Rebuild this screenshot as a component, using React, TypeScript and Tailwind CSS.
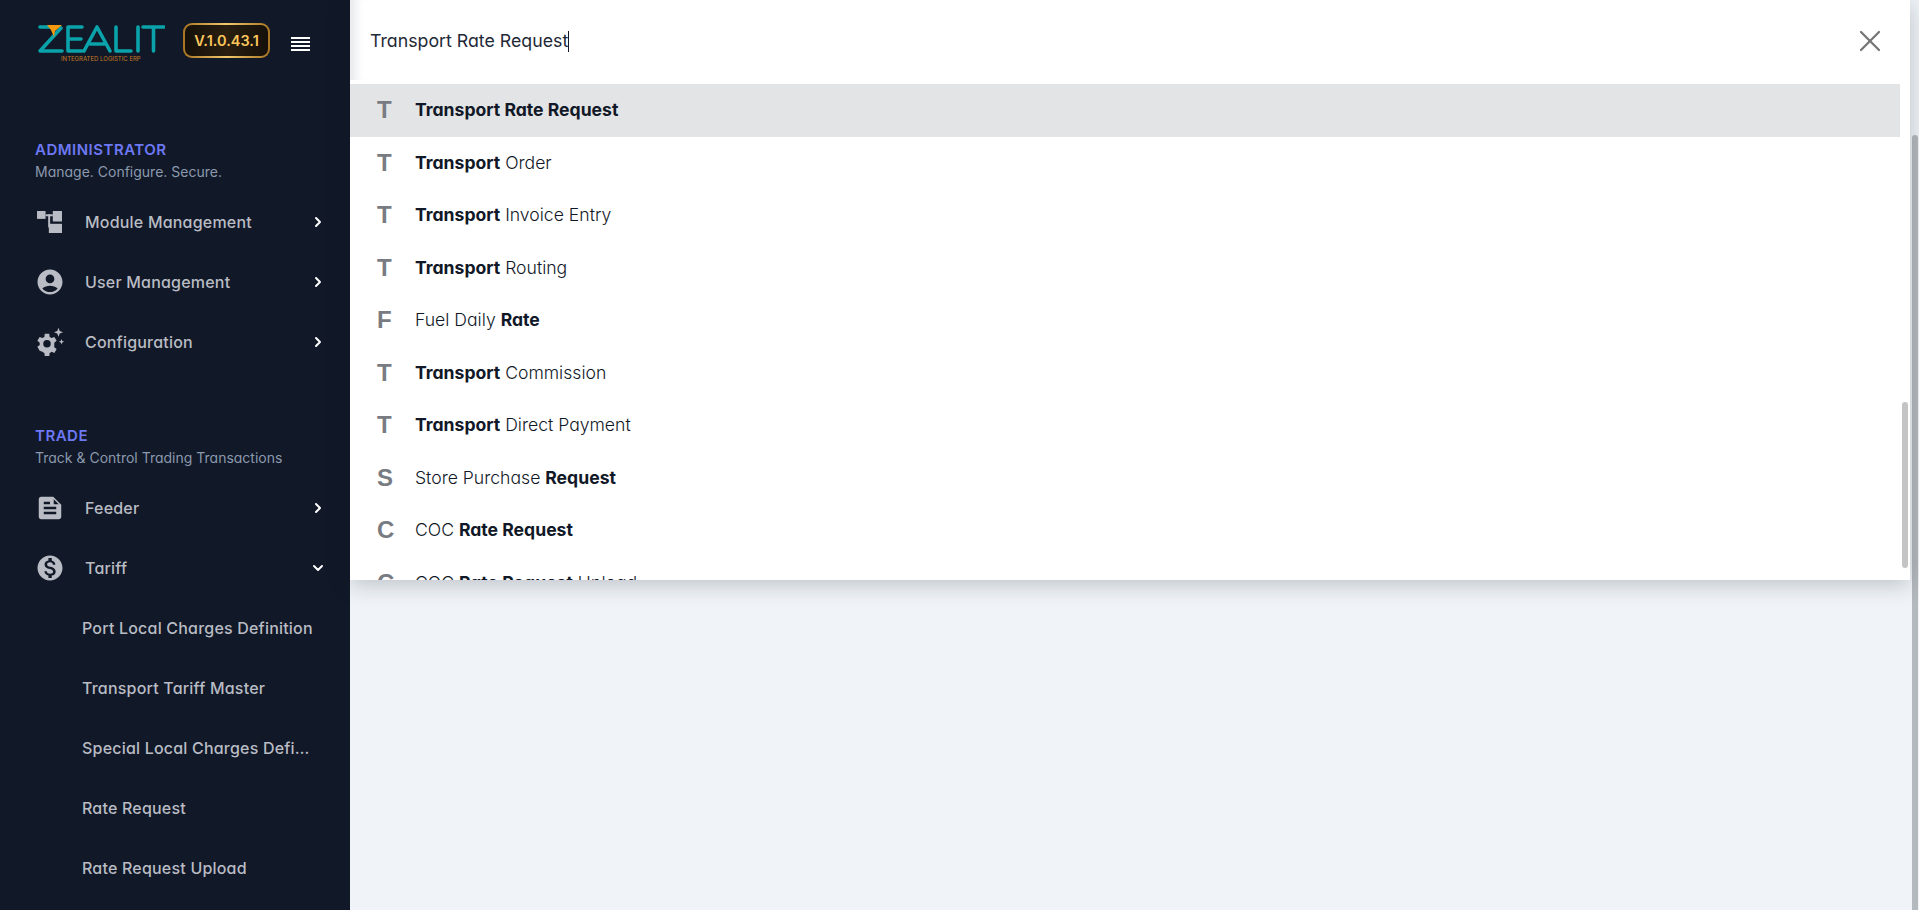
import type { ReactNode } from 'react';
import { ChevronRight, ChevronDown, X } from 'lucide-react';

const FONT = "font-['Inter',sans-serif] [font-feature-settings:'cv11']";

function ModuleIcon() {
  return (
    <svg viewBox="112 66 76 67" className="w-[25px] h-[22px] -ml-[1px] fill-[#b9bcc4]">
      <rect x="112" y="66" width="26" height="24" />
      <rect x="160" y="66" width="28" height="32" />
      <rect x="148" y="105" width="40" height="28" />
      <rect x="138" y="76" width="22" height="6" />
      <rect x="146" y="76" width="6" height="40" />
    </svg>
  );
}

function UserIcon() {
  return (
    <svg viewBox="0 0 24 24" className="w-[30px] h-[30px] fill-[#b9bcc4]">
      <path d="M12 2C6.48 2 2 6.48 2 12s4.48 10 10 10 10-4.48 10-10S17.52 2 12 2zm0 4c1.93 0 3.5 1.57 3.5 3.5S13.93 13 12 13s-3.5-1.57-3.5-3.5S10.07 6 12 6zm0 14c-2.03 0-4.43-.82-6.14-2.88C7.55 15.8 9.68 15 12 15s4.45.8 6.14 2.12C16.43 19.18 14.03 20 12 20z" />
    </svg>
  );
}

function GearIcon() {
  return (
    <svg viewBox="0 0 24 24" className="w-[30px] h-[30px] fill-[#b9bcc4]">
      <path d="M17.4 12.9c.04-.3.06-.6.06-.9s-.02-.6-.06-.9l1.9-1.5-1.8-3.1-2.2.9c-.5-.4-1-.7-1.6-.9L13.4 4h-3.6l-.3 2.5c-.6.2-1.1.5-1.6.9l-2.2-.9-1.8 3.1 1.9 1.5c-.04.3-.06.6-.06.9s.02.6.06.9l-1.9 1.5 1.8 3.1 2.2.9c.5.4 1 .7 1.6.9l.3 2.5h3.6l.3-2.5c.6-.2 1.1-.5 1.6-.9l2.2.9 1.8-3.1-1.9-1.5zM11.6 15a3 3 0 1 1 0-6 3 3 0 0 1 0 6z" transform="translate(-2 1.4)" />
      <path d="m18.8 .6 1 2.6 2.6 1-2.6 1-1 2.6-1-2.6-2.6-1 2.6-1zM21.2 9.6l.6 1.6 1.6.6-1.6.6-.6 1.6-.6-1.6-1.6-.6 1.6-.6z" />
    </svg>
  );
}

function DocIcon() {
  return (
    <svg viewBox="0 0 24 24" className="w-[30px] h-[30px] fill-[#b9bcc4]">
      <path d="M14.6 3H5c-1.1 0-2 .9-2 2v14c0 1.1.9 2 2 2h14c1.1 0 2-.9 2-2V9.4L14.6 3zM7 7h5v2H7V7zm10 10H7v-2h10v2zm0-4H7v-2h10v2zm-2-4V5l4 4h-4z" />
    </svg>
  );
}

function DollarIcon() {
  return (
    <svg viewBox="0 0 24 24" className="w-[30px] h-[30px] fill-[#b9bcc4]">
      <path d="M12 2C6.48 2 2 6.48 2 12s4.48 10 10 10 10-4.48 10-10S17.52 2 12 2zm1.41 16.09V20h-2.67v-1.93c-1.71-.36-3.16-1.46-3.27-3.4h1.96c.1 1.05.82 1.87 2.65 1.87 1.96 0 2.4-.98 2.4-1.59 0-.83-.44-1.61-2.67-2.14-2.48-.6-4.18-1.62-4.18-3.67 0-1.72 1.39-2.84 3.11-3.21V4h2.67v1.95c1.86.45 2.79 1.86 2.85 3.39H14.3c-.05-1.11-.64-1.87-2.22-1.87-1.5 0-2.4.68-2.4 1.64 0 .84.65 1.39 2.67 1.91s4.18 1.39 4.18 3.91c-.01 1.83-1.38 2.83-3.12 3.16z" />
    </svg>
  );
}

function Logo() {
  return (
    <div className="relative w-[128px] h-[42px]">
      <svg viewBox="0 0 128 30" className="absolute left-0 top-0 w-[128px] h-[30px]">
        <g fill="none" stroke="#0aa3ab" strokeWidth="3.6" strokeLinecap="round" strokeLinejoin="round">
          <path d="M3 3H16" />
          <path d="M24 4 3 27H25" />
          <path d="M45 3H31V27H45M31 15H44" />
          <path d="M47 27 60 3 73 27M53 20H68" />
          <path d="M79 3V27H94" />
          <path d="M101 3V27" />
          <path d="M106 3H127M116.5 3V27" />
        </g>
        <path d="M10 1H25L18 7 17 13 14 6Z" fill="#f59a0e" />
      </svg>
      <span className="absolute left-[24px] top-[32px] text-[6px] leading-none whitespace-nowrap text-[#c57a24] font-['Inter',sans-serif]">
        INTEGRATED LOGISTIC ERP
      </span>
    </div>
  );
}

function HamburgerIcon() {
  return (
    <div className="flex flex-col gap-[2px] w-[19px]">
      <div className="h-[2px] bg-white" />
      <div className="h-[2px] bg-white" />
      <div className="h-[2px] bg-white" />
      <div className="h-[2px] bg-white" />
    </div>
  );
}

function NavItem({ icon, label, open }: { icon: ReactNode; label: string; open?: boolean }) {
  return (
    <div className="flex items-center h-[60px] pl-[35px] pr-[24px]">
      <div className="w-[30px] h-[30px] flex items-center justify-center shrink-0">{icon}</div>
      <span className="ml-[20px] flex-1 text-[16px] tracking-[0.2px] font-medium text-[#b9bcc4]">{label}</span>
      {open ? (
        <ChevronDown className="w-[16px] h-[16px] text-white" strokeWidth={3} />
      ) : (
        <ChevronRight className="w-[16px] h-[16px] text-white" strokeWidth={3} />
      )}
    </div>
  );
}

function SubItem({ label }: { label: string }) {
  return (
    <div className="flex items-center h-[60px] pl-[82px] pr-[37px]">
      <span className="truncate text-[16px] tracking-[0.2px] font-medium text-[#b9bcc4]">{label}</span>
    </div>
  );
}

function SectionHead({ title, sub }: { title: string; sub: string }) {
  return (
    <div className="pl-[35px]">
      <div className="text-[15px] leading-[20px] font-semibold tracking-[0.5px] text-[#6d78f5]">{title}</div>
      <div className="text-[14px] leading-[20px] mt-[2px] text-[#8b99ae]">{sub}</div>
    </div>
  );
}

const results: { letter: string; parts: [string, boolean][] }[] = [
  { letter: 'T', parts: [['Transport Rate Request', true]] },
  { letter: 'T', parts: [['Transport', true], [' Order', false]] },
  { letter: 'T', parts: [['Transport', true], [' Invoice Entry', false]] },
  { letter: 'T', parts: [['Transport', true], [' Routing', false]] },
  { letter: 'F', parts: [['Fuel Daily ', false], ['Rate', true]] },
  { letter: 'T', parts: [['Transport', true], [' Commission', false]] },
  { letter: 'T', parts: [['Transport', true], [' Direct Payment', false]] },
  { letter: 'S', parts: [['Store Purchase ', false], ['Request', true]] },
  { letter: 'C', parts: [['COC ', false], ['Rate Request', true]] },
  { letter: 'C', parts: [['COC ', false], ['Rate Request', true], [' Upload', false]] },
];

export default function App() {
  return (
    <div className={`flex h-[910px] w-full overflow-hidden bg-[#f0f4f8] ${FONT}`}>
      {/* Sidebar */}
      <aside className="w-[350px] shrink-0 bg-[#111827] flex flex-col overflow-hidden">
        <div className="flex items-start h-[80px] pl-[37px]">
          <div className="mt-[24px]">
            <Logo />
          </div>
          <div className="mt-[23px] ml-[18px] w-[87px] h-[35px] rounded-[9px] p-[2px] bg-linear-to-r from-[#a87422] via-[#f2cb6b] to-[#a87422]">
            <div className="w-full h-full rounded-[7px] bg-linear-to-r from-[#14100a] via-[#2a1f10] to-[#14100a] flex items-center justify-center text-[14.5px] font-semibold text-[#fbc75c] font-['Inter',sans-serif]">
              V.1.0.43.1
            </div>
          </div>
          <div className="mt-[37px] ml-[21px]">
            <HamburgerIcon />
          </div>
        </div>
        <div className="mt-[60px]">
          <SectionHead title="ADMINISTRATOR" sub="Manage. Configure. Secure." />
        </div>
        <div className="mt-[10px]">
          <NavItem icon={<ModuleIcon />} label="Module Management" />
          <NavItem icon={<UserIcon />} label="User Management" />
          <NavItem icon={<GearIcon />} label="Configuration" />
        </div>
        <div className="mt-[54px]">
          <SectionHead title="TRADE" sub="Track & Control Trading Transactions" />
        </div>
        <div className="mt-[10px]">
          <NavItem icon={<DocIcon />} label="Feeder" />
          <NavItem icon={<DollarIcon />} label="Tariff" open />
          <SubItem label="Port Local Charges Definition" />
          <SubItem label="Transport Tariff Master" />
          <SubItem label="Special Local Charges Definition" />
          <SubItem label="Rate Request" />
          <SubItem label="Rate Request Upload" />
        </div>
      </aside>

      {/* Main */}
      <main className="flex-1 min-w-0 flex">
        <div className="flex-1 min-w-0 relative">
          <div className="relative z-10 h-[580px] bg-white shadow-[0_4px_22px_rgba(17,24,39,0.24)] flex flex-col overflow-hidden">
            <div className="h-[80px] shrink-0 flex items-center pl-[20px] pr-[22px] pt-[2px] shadow-[inset_14px_0_12px_-10px_rgba(17,24,39,0.12)]">
              <span className="text-[17.75px] text-[#1f2937]">Transport Rate Request</span>
              <span className="w-px h-[21px] bg-[#111827]" />
              <div className="flex-1" />
              <X className="w-[36px] h-[36px] text-[#757575]" strokeWidth={1.5} />
            </div>
            <div className="relative flex-1 min-h-0 overflow-hidden pt-[4px]">
              <div className="pr-[10px]">
                {results.map((r, i) => (
                  <div key={i} className={`flex items-center h-[52.5px] ${i === 0 ? 'bg-[#e3e4e6]' : ''}`}>
                    <span className="w-[65px] pl-[27px] shrink-0 text-[24px] font-semibold text-[#787b82] font-['Liberation_Sans',sans-serif] leading-none">
                      {r.letter}
                    </span>
                    <span className="text-[17.6px] text-[#111827] font-light whitespace-pre">
                      {r.parts.map(([t, b], j) => (
                        <span key={j} className={b ? 'font-bold' : ''}>
                          {t}
                        </span>
                      ))}
                    </span>
                  </div>
                ))}
              </div>
              <div className="absolute right-[2px] top-[322px] w-[6px] h-[166px] rounded-full bg-[#c4c4c4]" />
            </div>
          </div>
        </div>
        <div className="w-[9px] shrink-0 bg-[#f0f4f8] relative">
          <div className="absolute left-[2px] right-[1px] top-[135px] bottom-0 rounded-t-[3px] bg-[#b4b9bd]" />
        </div>
      </main>
    </div>
  );
}
